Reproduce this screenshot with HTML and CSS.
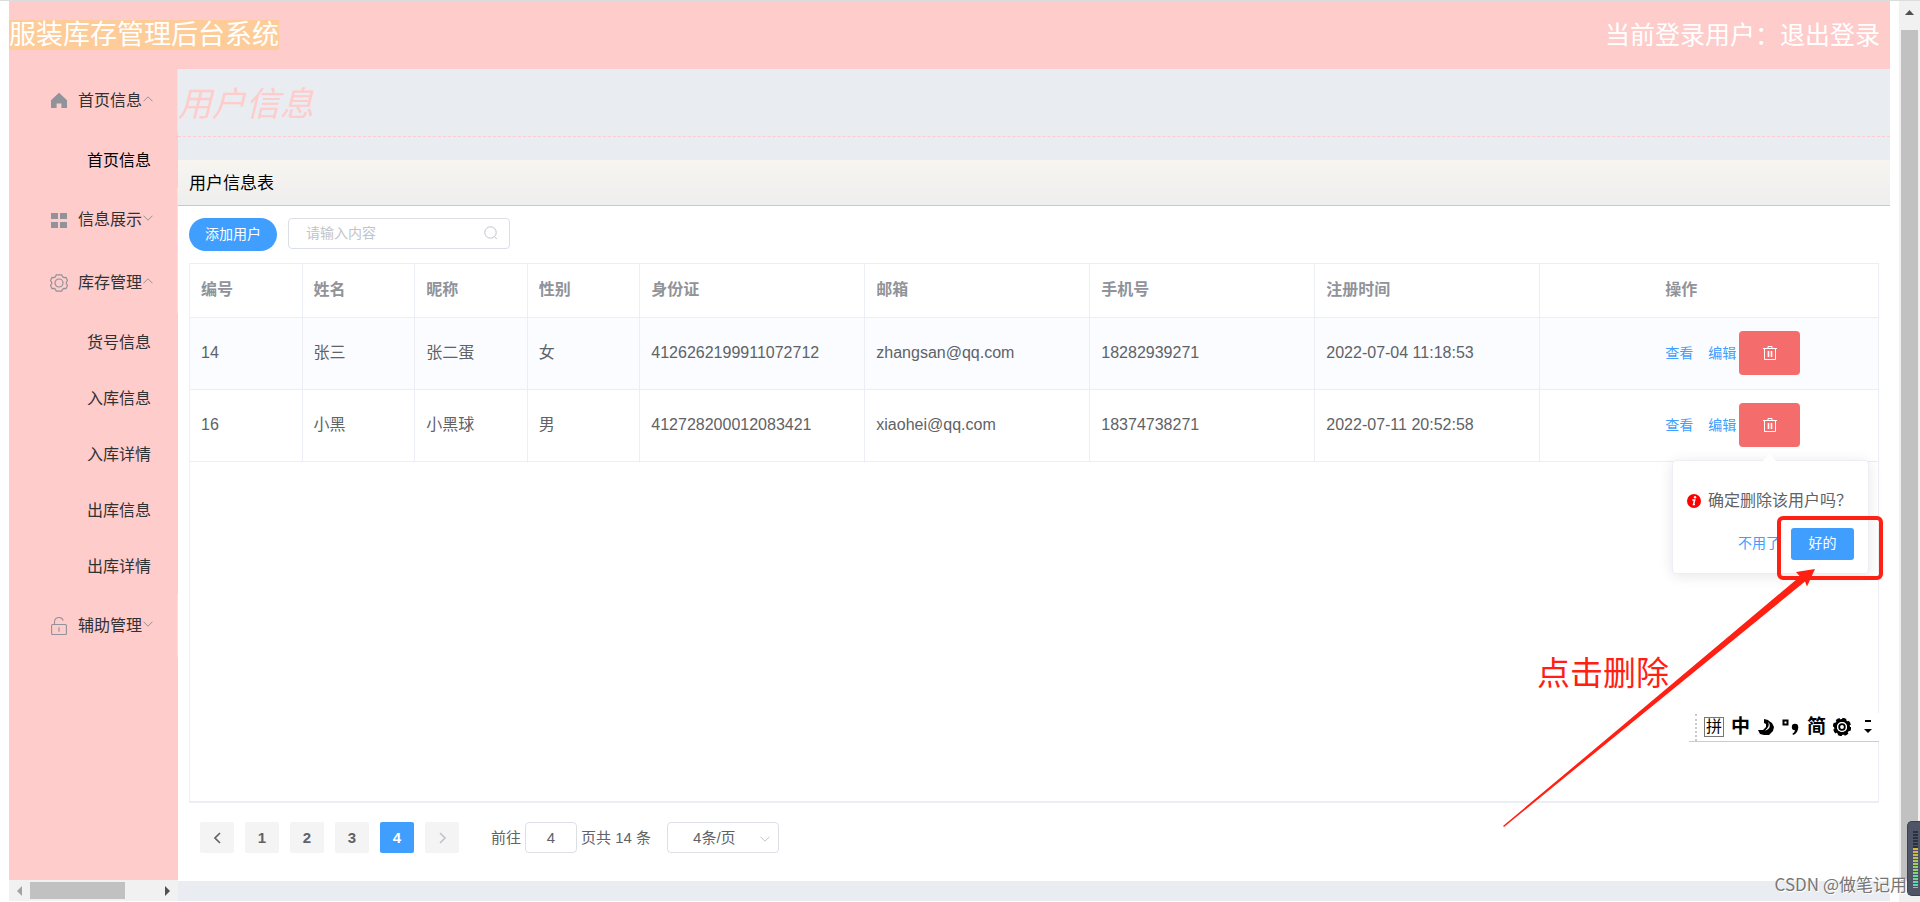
FILE: index.html
```html
<!DOCTYPE html>
<html lang="zh-CN">
<head>
<meta charset="utf-8">
<title>服装库存管理后台系统</title>
<link rel="stylesheet" href="styles.css">
</head>
<body>
<div class="page">
  <div class="app">
    <header class="topbar">
      <h1 class="brand"><span class="brand-mark">服装库存管理后台系统</span></h1>
      <div class="session">当前登录用户：<a class="logout" href="#">退出登录</a></div>
    </header>
    <div class="body">
      <aside class="side">
        <nav class="menu">
          <button class="menu-title" type="button">
            <svg class="menu-icon" viewBox="0 0 18 18"><path d="M9 .8 1 8.200V16h5.600v-4.600h4.800V16H17V8.200z" fill="#909399"/></svg>
            首页信息
            <svg class="arrow" viewBox="0 0 10 6"><path d="M.5 5.300 5 .8l4.500 4.500"/></svg>
          </button>
          <a class="menu-item active" href="#">首页信息</a>
          <button class="menu-title" type="button">
            <svg class="menu-icon" viewBox="0 0 18 18"><path d="M1 2h7v6H1zM10 2h7v6h-7zM1 11h7v6H1zM10 11h7v6h-7z" fill="#909399"/></svg>
            信息展示
            <svg class="arrow" viewBox="0 0 10 6"><path d="M.5.7 5 5.200 9.500.7"/></svg>
          </button>
          <button class="menu-title" type="button">
            <svg class="menu-icon" viewBox="0 0 18 18" fill="none" stroke="#909399" stroke-width="1.200"><circle cx="9" cy="9" r="4"/><path d="M6.300.8h5.400l.9 2 1.400.8 2-.2 1.500 3.200-1.200 1.600v1.600l1.200 1.600-1.500 3.200-2-.2-1.400.8-.9 2H6.300l-.9-2-1.400-.8-2 .2L.5 11.400l1.200-1.600V8.200L.5 6.600 2 3.400l2 .2 1.400-.8z"/></svg>
            库存管理
            <svg class="arrow" viewBox="0 0 10 6"><path d="M.5 5.300 5 .8l4.500 4.500"/></svg>
          </button>
          <a class="menu-item" href="#">货号信息</a>
          <a class="menu-item" href="#">入库信息</a>
          <a class="menu-item" href="#">入库详情</a>
          <a class="menu-item" href="#">出库信息</a>
          <a class="menu-item" href="#">出库详情</a>
          <button class="menu-title" type="button">
            <svg class="menu-icon" viewBox="0 0 18 18" fill="none" stroke="#909399" stroke-width="1.100"><rect x="1.600" y="7.500" width="14.800" height="10" rx="1"/><path d="M4.500 7.500V5a4.500 4.500 0 0 1 8.800-1.300M9 10.300v4.400"/></svg>
            辅助管理
            <svg class="arrow" viewBox="0 0 10 6"><path d="M.5.7 5 5.200 9.500.7"/></svg>
          </button>
        </nav>
        <div class="hscroll">
          <svg class="hscroll-arrow" viewBox="0 0 5 10"><path d="M5 0v10L0 5z" fill="#a3a3a3"/></svg>
          <div class="hscroll-track"><div class="hscroll-thumb"></div></div>
          <svg class="hscroll-arrow" viewBox="0 0 5 10"><path d="M0 0v10l5-5z" fill="#505050"/></svg>
        </div>
      </aside>
      <main class="main">
        <h2 class="heading">用户信息</h2>
        <section class="card">
          <h3 class="card-head">用户信息表</h3>
          <div class="card-body">
            <div class="tools">
              <button class="add" type="button">添加用户</button>
              <label class="search">
                <input class="search-input" type="text" placeholder="请输入内容" aria-label="搜索">
                <svg class="search-icon" viewBox="0 0 14 14"><circle cx="6.500" cy="6.500" r="5.700"/><path d="m10.500 10.700 2.300 2.300"/></svg>
              </label>
            </div>
            <div class="grid">
              <table class="table">
                <colgroup>
                  <col class="c1"><col class="c1"><col class="c1"><col class="c1">
                  <col class="c2"><col class="c2"><col class="c2"><col class="c2"><col class="c3">
                </colgroup>
                <thead>
                  <tr><th>编号</th><th>姓名</th><th>昵称</th><th>性别</th><th>身份证</th><th>邮箱</th><th>手机号</th><th>注册时间</th><th class="ops">操作</th></tr>
                </thead>
                <tbody>
                  <tr class="striped">
                    <td>14</td><td>张三</td><td>张二蛋</td><td>女</td><td>4126262199911072712</td><td>zhangsan@qq.com</td><td>18282939271</td><td>2022-07-04 11:18:53</td>
                    <td class="ops"><div class="actions"><button class="link" type="button">查看</button><button class="link edit" type="button">编辑</button><button class="del" type="button" aria-label="删除"><svg class="trash" viewBox="0 0 14 14"><path d="M0 2.500h14M5 2.500V.5h4v2M1.500 2.500v11h11v-11"/><path d="M5.500 5v6M8.500 5v6" stroke-width="1.600"/></svg></button></div></td>
                  </tr>
                  <tr>
                    <td>16</td><td>小黑</td><td>小黑球</td><td>男</td><td>412728200012083421</td><td>xiaohei@qq.com</td><td>18374738271</td><td>2022-07-11 20:52:58</td>
                    <td class="ops"><div class="actions"><button class="link" type="button">查看</button><button class="link edit" type="button">编辑</button><button class="del" type="button" aria-label="删除"><svg class="trash" viewBox="0 0 14 14"><path d="M0 2.500h14M5 2.500V.5h4v2M1.500 2.500v11h11v-11"/><path d="M5.500 5v6M8.500 5v6" stroke-width="1.600"/></svg></button></div></td>
                  </tr>
                </tbody>
              </table>
            </div>
            <div class="pager">
              <button class="page-btn" type="button" aria-label="上一页"><svg class="chev" viewBox="0 0 7 12"><path d="M6 1 1 6l5 5" stroke="#606266"/></svg></button>
              <button class="page-btn" type="button">1</button>
              <button class="page-btn" type="button">2</button>
              <button class="page-btn" type="button">3</button>
              <button class="page-btn current" type="button">4</button>
              <button class="page-btn" type="button" aria-label="下一页" disabled><svg class="chev" viewBox="0 0 7 12"><path d="m1 1 5 5-5 5" stroke="#c0c4cc"/></svg></button>
              <label class="jump">前往<input class="jump-input" type="text" value="4">页</label><span>共 14 条</span>
              <span class="size">
                <select class="size-select" aria-label="每页条数"><option>4条/页</option></select>
                <svg class="size-arrow" viewBox="0 0 10 6"><path d="M.5.7 5 5.200 9.500.7"/></svg>
              </span>
            </div>
          </div>
        </section>
      </main>
    </div>
  </div>
  <div class="vscroll">
    <svg class="vscroll-arrow" viewBox="0 0 9 5"><path d="M4.500 0 9 5H0z" fill="#505050"/></svg>
    <div class="vscroll-thumb"></div>
  </div>

  <div class="popover" role="dialog" aria-label="删除确认">
    <p class="pop-text"><svg class="pop-icon" viewBox="0 0 14 14"><circle cx="7" cy="7" r="7" fill="#f00"/><circle cx="8" cy="3.300" r="1.200" fill="#fff"/><path d="M5.300 6h2.400l-1.200 4.600h1.500" fill="none" stroke="#fff" stroke-width="1.500"/></svg>确定删除该用户吗？</p>
    <div class="pop-actions">
      <button class="link cancel" type="button">不用了</button>
      <button class="confirm" type="button">好的</button>
    </div>
  </div>

  <div class="ime">
    <span class="ime-grip"></span>
    <span class="ime-box">拼</span>
    <span class="ime-char">中</span>
    <svg class="ime-icon" viewBox="0 0 18 18"><path d="M7 1v4l2 1v3l-3 3H1l2 4 4 1h5l4-4 1-4-2-4-3-2-1-1z"/><path d="M10 3.500c3 2 2 6-2 9 4-.5 6-4 4-7.500z" fill="#fff"/></svg>
    <svg class="ime-icon" viewBox="0 0 18 18"><path d="M1.500 2.500h4v4h-4z" fill="none" stroke="#000" stroke-width="2"/><circle cx="13" cy="9" r="3.200"/><path d="M16.200 9c0 4-2 7-5.200 8l-.5-1.500c2-1 2.500-2.500 2.500-4z"/></svg>
    <span class="ime-char">简</span>
    <svg class="ime-icon" viewBox="0 0 18 18"><circle cx="9" cy="9" r="6.500" fill="none" stroke="#000" stroke-width="3"/><circle cx="9" cy="9" r="7.800" fill="none" stroke="#000" stroke-width="2.800" stroke-dasharray="3.800 2.326"/><circle cx="9" cy="9" r="5" fill="#fff"/><circle cx="9" cy="9" r="2.800" fill="none" stroke="#000" stroke-width="1.800"/></svg>
    <svg class="ime-more" viewBox="0 0 8 14"><path d="M1 0h6v2H1zM0 9h8l-4 4z"/></svg>
  </div>

  <div class="note">点击删除</div>
  <div class="mark"></div>
  <svg class="pointer" viewBox="0 0 312 258"><path d="M0 257 297 7.500 293 3 312 0 304 17.500 302 12.500 1 258z" fill="#ff2014"/></svg>
  <div class="watermark">CSDN @做笔记用</div>
  <div class="meter"><span class="meter-idle"></span><span class="meter-live"></span></div>
</div>
</body>
</html>
```
FILE: styles.css
```css
* { box-sizing: border-box; }
body {
  margin: 0;
  background: #fff;
  color: #606266;
  font-family: "Liberation Sans", "Noto Sans CJK SC", sans-serif;
  font-size: 16px;
  line-height: 24px;
}
button, input, select { font: inherit; color: inherit; margin: 0; }
button { border: 0; padding: 0; background: none; }
a { color: inherit; text-decoration: none; }
h1, h2, h3, p { margin: 0; font-weight: 400; }
svg { display: block; flex: none; }

.page {
  position: relative;
  display: flex;
  min-height: 100vh;
  border-top: 1px solid #dcdcdc;
  overflow: hidden;
}
.app {
  flex: 1;
  min-width: 0;
  display: flex;
  flex-direction: column;
  padding: 0 9px 1px;
}

.topbar {
  display: flex;
  justify-content: space-between;
  align-items: center;
  height: 68px;
  padding-right: 10px;
  background: #fecccb;
  color: #fff;
}
.brand { font-size: 27px; line-height: 30px; }
.brand-mark { display: block; background: #fecc99; }
.session { font-size: 25px; line-height: 30px; }

.body { flex: 1; display: flex; }

.side {
  flex: none;
  width: 169px;
  display: flex;
  flex-direction: column;
  justify-content: space-between;
  background: #fecccb;
}
.menu { display: flex; flex-direction: column; color: #303133; }
.menu-title {
  display: flex;
  align-items: center;
  height: 63px;
  padding-left: 41px;
  border-right: 1px solid #e6e6e6;
}
.menu-icon { width: 18px; height: 18px; margin-right: 10px; }
.arrow { width: 10px; height: 6px; fill: none; stroke: #909399; margin: 0 0 4px 1px; }
.menu-item { height: 56px; padding-left: 78px; line-height: 58px; }
.menu-item.active { color: #000; }

.hscroll {
  display: flex;
  align-items: center;
  height: 21px;
  padding: 0 8px;
  background: #f1f1f1;
}
.hscroll-arrow { width: 5px; height: 10px; }
.hscroll-track { flex: 1; padding: 0 8px; }
.hscroll-thumb { width: 95px; height: 17px; background: #c1c1c1; }

.main {
  flex: 1;
  min-width: 0;
  display: flex;
  flex-direction: column;
  padding-bottom: 20px;
  background: #e9edf1;
}
.heading {
  height: 68px;
  margin-bottom: 23px;
  border-bottom: 1px dashed #fecccb;
  color: #fecccb;
  font-size: 34px;
  font-style: italic;
  line-height: 70px;
}
.card { flex: 1; display: flex; flex-direction: column; background: #fff; }
.card-head {
  height: 46px;
  padding-left: 11px;
  border-bottom: 1px solid #c8c8c8;
  background: linear-gradient(#f8f5f0, #eee);
  color: #000;
  font-size: 17px;
  line-height: 48px;
}
.card-body { flex: 1; display: flex; flex-direction: column; padding: 12px 11px 28px; }

.tools { display: flex; gap: 11px; height: 45px; align-items: flex-start; }
.add {
  height: 33px;
  padding: 0 16px 2px;
  border-radius: 17px;
  background: #409eff;
  color: #fff;
  font-size: 14px;
}
.search { position: relative; width: 222px; }
.search-input {
  display: block;
  width: 100%;
  height: 31px;
  padding: 0 34px 2px 17px;
  border: 1px solid #dcdfe6;
  border-radius: 4px;
  font-size: 14px;
}
.search-input::placeholder { color: #c0c4cc; }
.search-icon {
  position: absolute;
  top: 8px;
  right: 12px;
  width: 14px;
  height: 14px;
  fill: none;
  stroke: #c0c4cc;
}

.grid { flex: 1; border: 1px solid #ebeef5; border-bottom-width: 2px; }
.table { width: 100%; table-layout: fixed; border-collapse: separate; border-spacing: 0; }
.c1 { width: 6.67%; }
.c2 { width: 13.33%; }
.c3 { width: 20%; }
.table th, .table td {
  padding: 0 11px 2px;
  border-right: 1px solid #ebeef5;
  border-bottom: 1px solid #ebeef5;
  text-align: left;
  white-space: nowrap;
}
.table th:last-child, .table td:last-child { border-right: 0; }
.table th { height: 54px; color: #909399; font-weight: 700; }
.table td { height: 72px; }
.striped td { background: #fafcff; }
.table .ops { padding-left: 125px; }
.actions { display: flex; align-items: center; }
.link { color: #409eff; font-size: 14px; }
.edit { margin: 0 3px 0 15px; }
.del {
  display: grid;
  place-items: center;
  width: 61px;
  height: 44px;
  border-radius: 4px;
  background: #f56c6c;
}
.trash { width: 14px; height: 14px; fill: none; stroke: #fff; }

.pager { display: flex; align-items: center; margin-top: 19px; padding-left: 11px; font-size: 15px; }
.page-btn {
  display: grid;
  place-items: center;
  width: 34px;
  height: 31px;
  margin-right: 11px;
  border-radius: 2px;
  background: #f4f4f5;
  font-weight: 700;
}
.page-btn.current { background: #409eff; color: #fff; }
.chev { width: 7px; height: 12px; fill: none; stroke-width: 1.600; }
.jump { display: flex; align-items: center; margin-left: 21px; }
.jump-input {
  width: 52px;
  height: 31px;
  margin: 0 4px;
  padding: 0;
  border: 1px solid #dcdfe6;
  border-radius: 4px;
  text-align: center;
}
.size { position: relative; margin-left: 16px; }
.size-select {
  display: block;
  width: 112px;
  height: 31px;
  padding: 0 25px;
  border: 1px solid #dcdfe6;
  border-radius: 4px;
  background: #fff;
  appearance: none;
}
.size-arrow {
  position: absolute;
  right: 9px;
  top: 14px;
  width: 10px;
  height: 6px;
  fill: none;
  stroke: #c0c4cc;
}

.vscroll {
  flex: none;
  width: 21px;
  display: flex;
  flex-direction: column;
  align-items: center;
  padding: 9px 2px 21px;
  background: #f1f1f1;
}
.vscroll-arrow { width: 9px; height: 5px; }
.vscroll-thumb { flex: 1; width: 17px; margin-top: 15px; background: #c1c1c1; }

.popover {
  position: absolute;
  top: 459px;
  right: 51px;
  width: 197px;
  padding: 28px 14px 13px;
  border: 1px solid #ebeef5;
  border-radius: 4px;
  background: #fff;
  box-shadow: 0 2px 14px rgba(0, 0, 0, 0.1);
}
.popover::before {
  content: "";
  position: absolute;
  top: -5px;
  left: 92px;
  width: 9px;
  height: 9px;
  background: #fff;
  transform: rotate(45deg);
}
.pop-text { display: flex; align-items: center; white-space: nowrap; }
.pop-icon { width: 14px; height: 14px; margin-right: 7px; }
.pop-actions { display: flex; justify-content: flex-end; align-items: center; gap: 11px; margin-top: 15px; }
.confirm {
  width: 63px;
  height: 32px;
  padding-bottom: 2px;
  border-radius: 3px;
  background: #409eff;
  color: #fff;
  font-size: 14px;
}
.cancel { padding-bottom: 2px; }

.ime {
  position: absolute;
  top: 712px;
  right: 41px;
  display: flex;
  align-items: center;
  gap: 7px;
  width: 190px;
  height: 29px;
  padding: 0 7px 0 6px;
  border-bottom: 1px solid #ccc;
  background: #fff;
  color: #000;
}
.ime-grip { height: 27px; border-left: 2px dotted #c8c8c8; }
.ime-box { width: 20px; height: 20px; border: 1px solid #777; font-size: 16px; line-height: 18px; text-align: center; }
.ime-char { width: 19px; font-size: 19px; font-weight: 700; }
.ime-icon { width: 18px; height: 18px; }
.ime-more { width: 8px; height: 14px; margin-left: auto; }

.note {
  position: absolute;
  top: 649px;
  right: 251px;
  color: #ff2014;
  font-size: 33px;
  line-height: 48px;
}
.mark {
  position: absolute;
  top: 515px;
  right: 37px;
  width: 106px;
  height: 64px;
  border: 4px solid #ff2014;
  border-radius: 6px;
}
.pointer { position: absolute; top: 568px; right: 105px; width: 312px; height: 258px; }
.watermark {
  position: absolute;
  top: 870px;
  right: 13px;
  color: #777;
  font-family: "Noto Sans CJK SC", sans-serif;
  font-size: 17px;
  line-height: 26px;
  text-shadow: 1px 1px 0 #fff;
}
.meter {
  position: absolute;
  top: 820px;
  right: 0;
  width: 13px;
  height: 75px;
  padding: 9px 3px 8px 5px;
  border: 1px solid #3c4150;
  border-right: 0;
  border-radius: 5px 0 0 5px;
  background: #4f5566;
}
.meter-idle, .meter-live { display: block; width: 5px; }
.meter-idle { height: 17px; background: repeating-linear-gradient(#2c3040 0 2px, #4f5566 2px 3px); }
.meter-live {
  height: 40px;
  background:
    repeating-linear-gradient(transparent 0 2px, #4f5566 2px 3px),
    linear-gradient(#e0b040, #a0d060 40%, #50d8c0);
}
```
